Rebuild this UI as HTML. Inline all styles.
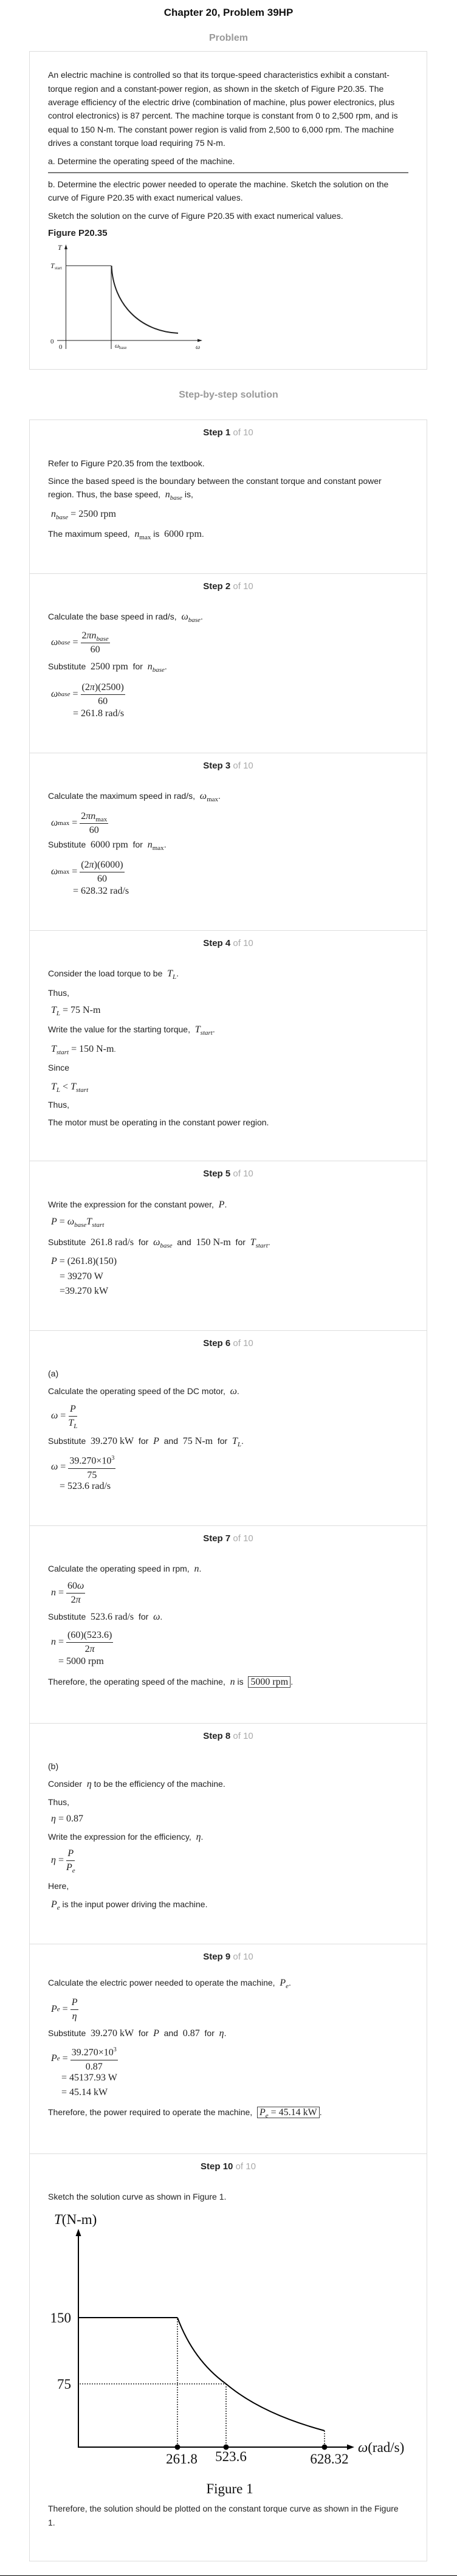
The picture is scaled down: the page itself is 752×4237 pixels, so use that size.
<!DOCTYPE html>
<html><head><meta charset="utf-8">
<style>
*{margin:0;padding:0;box-sizing:border-box}
html,body{width:752px;height:4237px;background:#fff;overflow:hidden}
body{position:relative;font-family:"Liberation Sans",Arial,sans-serif;color:#222}
.t{position:absolute;left:79px;line-height:20px;height:20px;white-space:nowrap;font-size:14px;color:#222}
.h{position:absolute;left:0;width:752px;text-align:center;font-family:"Liberation Sans Narrow","Liberation Sans",sans-serif;font-weight:bold;white-space:nowrap}
.sh{position:absolute;left:48px;width:655px;text-align:center;font-family:"Liberation Sans Narrow","Liberation Sans",sans-serif;font-weight:bold;font-size:15px;line-height:20px;height:20px;color:#222}
.sh span{font-weight:normal;color:#aaa}
.box{position:absolute;left:48px;width:655px;border:1px solid #ddd}
.dv{position:absolute;left:49px;width:653px;height:1px;background:#ddd}
.m{font-family:"Liberation Serif","Times New Roman",serif;font-size:16px}
i.v{font-family:"Liberation Serif",serif;font-style:italic;font-size:16px}
sub{font-family:"Liberation Serif",serif;font-size:11px;vertical-align:-4px;line-height:0}
sub.i{font-style:italic}
.fr{position:absolute;left:84px;height:40px;display:flex;align-items:center;font-family:"Liberation Serif",serif;font-size:16px;white-space:nowrap;color:#222}
.fc{display:inline-flex;flex-direction:column;align-items:center;margin-left:4px;vertical-align:middle}
.fc .n{line-height:22px;border-bottom:1px solid #222;padding:0 2px}
.fc .d{line-height:22px}
.bx{border:1px solid #444;padding:0 3px}
</style></head><body>

<div class="h" style="top:11px;font-size:17px;color:#111;line-height:20px">Chapter 20, Problem 39HP</div>
<div class="h" style="top:53px;font-size:16px;color:#999;line-height:20px">Problem</div>

<div class="box" style="top:84px;height:524px"></div>
<div class="t" style="top:113px">An electric machine is controlled so that its torque-speed characteristics exhibit a constant-</div>
<div class="t" style="top:136px">torque region and a constant-power region, as shown in the sketch of Figure P20.35. The</div>
<div class="t" style="top:158px">average efficiency of the electric drive (combination of machine, plus power electronics, plus</div>
<div class="t" style="top:180px">control electronics) is 87 percent. The machine torque is constant from 0 to 2,500 rpm, and is</div>
<div class="t" style="top:203px">equal to 150 N-m. The constant power region is valid from 2,500 to 6,000 rpm. The machine</div>
<div class="t" style="top:225px">drives a constant torque load requiring 75 N-m.</div>
<div class="t" style="top:255px">a. Determine the operating speed of the machine.</div>
<div style="position:absolute;left:79px;top:283px;width:593px;height:2px;background:#777"></div>
<div class="t" style="top:293px">b. Determine the electric power needed to operate the machine. Sketch the solution on the</div>
<div class="t" style="top:315px">curve of Figure P20.35 with exact numerical values.</div>
<div class="t" style="top:345px">Sketch the solution on the curve of Figure P20.35 with exact numerical values.</div>
<div class="t" style="top:374px;font-weight:bold;font-family:'Liberation Sans Narrow','Liberation Sans',sans-serif;font-size:15px">Figure P20.35</div>

<svg style="position:absolute;left:0;top:390px" width="360" height="200" viewBox="0 390 360 200">
<g font-family="Liberation Serif,serif" fill="#222">
<text x="95" y="411" font-size="12" font-style="italic">T</text>
<text x="83" y="441" font-size="12" font-style="italic">T</text><text x="90" y="443" font-size="7">start</text>
<text x="83" y="565" font-size="11">0</text>
<text x="97" y="574" font-size="11">0</text>
<text x="189" y="572" font-size="10" font-style="italic">ω</text><text x="196" y="574" font-size="7">base</text>
<text x="322" y="574" font-size="10" font-style="italic">ω</text>
</g>
<g stroke="#222" fill="none">
<line x1="108.5" y1="405" x2="108.5" y2="574" stroke-width="1"/>
<line x1="94" y1="560" x2="326" y2="560" stroke-width="1"/>
<line x1="108" y1="437" x2="183" y2="437" stroke-width="1"/>
<line x1="183" y1="437" x2="183" y2="574" stroke-width="1"/>
<path d="M183.5,437 C186,500 230,545 293,548" stroke-width="2"/>
</g>
<path d="M108.5,402 L106,410 L111,410 Z" fill="#222"/>
<path d="M333,560 L325,557.5 L325,562.5 Z" fill="#222"/>
</svg>

<div class="h" style="top:640px;font-size:16px;color:#999;line-height:20px">Step-by-step solution</div>

<div class="box" style="top:690px;height:3523px"></div>
<div class="dv" style="top:943px"></div>
<div class="dv" style="top:1238px"></div>
<div class="dv" style="top:1530px"></div>
<div class="dv" style="top:1909px"></div>
<div class="dv" style="top:2188px"></div>
<div class="dv" style="top:2509px"></div>
<div class="dv" style="top:2834px"></div>
<div class="dv" style="top:3197px"></div>
<div class="dv" style="top:3542px"></div>

<div class="sh" style="top:702px">Step 1 <span>of 10</span></div>
<div class="sh" style="top:955px">Step 2 <span>of 10</span></div>
<div class="sh" style="top:1250px">Step 3 <span>of 10</span></div>
<div class="sh" style="top:1542px">Step 4 <span>of 10</span></div>
<div class="sh" style="top:1921px">Step 5 <span>of 10</span></div>
<div class="sh" style="top:2200px">Step 6 <span>of 10</span></div>
<div class="sh" style="top:2521px">Step 7 <span>of 10</span></div>
<div class="sh" style="top:2846px">Step 8 <span>of 10</span></div>
<div class="sh" style="top:3209px">Step 9 <span>of 10</span></div>
<div class="sh" style="top:3554px">Step 10 <span>of 10</span></div>

<!-- Step 1 -->
<div class="t" style="top:752px">Refer to Figure P20.35 from the textbook.</div>
<div class="t" style="top:781px">Since the based speed is the boundary between the constant torque and constant power</div>
<div class="t" style="top:803px">region. Thus, the base speed, &nbsp;<i class="v">n</i><sub class="i">base</sub> is,</div>
<div class="t m" style="top:836px;left:84px"><i>n</i><sub class="i">base</sub> = 2500 rpm</div>
<div class="t" style="top:868px">The maximum speed, &nbsp;<i class="v">n</i><sub>max</sub> is &nbsp;<span class="m">6000 rpm</span>.</div>

<!-- Step 2 -->
<div class="t" style="top:1004px">Calculate the base speed in rad/s, &nbsp;<i class="v">ω</i><sub class="i">base</sub>.</div>
<div class="fr" style="top:1037px"><i>ω</i><sub class="i">base</sub>&nbsp;=<span class="fc"><span class="n">2<i>πn</i><sub class="i">base</sub></span><span class="d">60</span></span></div>
<div class="t" style="top:1086px">Substitute &nbsp;<span class="m">2500 rpm</span>&nbsp; for &nbsp;<i class="v">n</i><sub class="i">base</sub>.</div>
<div class="fr" style="top:1122px"><i>ω</i><sub class="i">base</sub>&nbsp;=<span class="fc"><span class="n">(2<i>π</i>)(2500)</span><span class="d">60</span></span></div>
<div class="t m" style="top:1164px;left:120px">= 261.8 rad/s</div>

<!-- Step 3 -->
<div class="t" style="top:1299px">Calculate the maximum speed in rad/s, &nbsp;<i class="v">ω</i><sub>max</sub>.</div>
<div class="fr" style="top:1334px"><i>ω</i><sub>max</sub>&nbsp;=<span class="fc"><span class="n">2<i>πn</i><sub>max</sub></span><span class="d">60</span></span></div>
<div class="t" style="top:1379px">Substitute &nbsp;<span class="m">6000 rpm</span>&nbsp; for &nbsp;<i class="v">n</i><sub>max</sub>.</div>
<div class="fr" style="top:1414px"><i>ω</i><sub>max</sub>&nbsp;=<span class="fc"><span class="n">(2<i>π</i>)(6000)</span><span class="d">60</span></span></div>
<div class="t m" style="top:1456px;left:120px">= 628.32 rad/s</div>

<!-- Step 4 -->
<div class="t" style="top:1591px">Consider the load torque to be &nbsp;<i class="v">T</i><sub class="i">L</sub>.</div>
<div class="t" style="top:1623px">Thus,</div>
<div class="t m" style="top:1652px;left:84px"><i>T</i><sub class="i">L</sub> = 75 N-m</div>
<div class="t" style="top:1683px">Write the value for the starting torque, &nbsp;<i class="v">T</i><sub class="i">start</sub>.</div>
<div class="t m" style="top:1716px;left:84px"><i>T</i><sub class="i">start</sub> = 150 N-m<span style="font-size:12px">.</span></div>
<div class="t" style="top:1746px">Since</div>
<div class="t m" style="top:1778px;left:84px"><i>T</i><sub class="i">L</sub> &lt; <i>T</i><sub class="i">start</sub></div>
<div class="t" style="top:1807px">Thus,</div>
<div class="t" style="top:1836px">The motor must be operating in the constant power region.</div>

<!-- Step 5 -->
<div class="t" style="top:1971px">Write the expression for the constant power, &nbsp;<i class="v">P</i>.</div>
<div class="t m" style="top:2000px;left:84px"><i>P</i> = <i>ω</i><sub class="i">base</sub><i>T</i><sub class="i">start</sub></div>
<div class="t" style="top:2033px">Substitute &nbsp;<span class="m">261.8 rad/s</span>&nbsp; for &nbsp;<i class="v">ω</i><sub class="i">base</sub>&nbsp; and &nbsp;<span class="m">150 N-m</span>&nbsp; for &nbsp;<i class="v">T</i><sub class="i">start</sub>.</div>
<div class="t m" style="top:2065px;left:84px"><i>P</i> = (261.8)(150)</div>
<div class="t m" style="top:2090px;left:98px">= 39270 W</div>
<div class="t m" style="top:2114px;left:98px">=39.270 kW</div>

<!-- Step 6 -->
<div class="t" style="top:2249px">(a)</div>
<div class="t" style="top:2278px">Calculate the operating speed of the DC motor, &nbsp;<i class="v">ω</i>.</div>
<div class="fr" style="top:2309px"><i>ω</i>&nbsp;=<span class="fc"><span class="n"><i>P</i></span><span class="d"><i>T</i><sub class="i">L</sub></span></span></div>
<div class="t" style="top:2360px">Substitute &nbsp;<span class="m">39.270 kW</span>&nbsp; for &nbsp;<i class="v">P</i>&nbsp; and &nbsp;<span class="m">75 N-m</span>&nbsp; for &nbsp;<i class="v">T</i><sub class="i">L</sub>.</div>
<div class="fr" style="top:2393px"><i>ω</i>&nbsp;=<span class="fc"><span class="n">39.270×10<sup style="font-size:10px">3</sup></span><span class="d">75</span></span></div>
<div class="t m" style="top:2435px;left:98px">= 523.6 rad/s</div>

<!-- Step 7 -->
<div class="t" style="top:2570px">Calculate the operating speed in rpm, &nbsp;<i class="v">n</i>.</div>
<div class="fr" style="top:2600px"><i>n</i>&nbsp;=<span class="fc"><span class="n">60<i>ω</i></span><span class="d">2<i>π</i></span></span></div>
<div class="t" style="top:2649px">Substitute &nbsp;<span class="m">523.6 rad/s</span>&nbsp; for &nbsp;<i class="v">ω</i>.</div>
<div class="fr" style="top:2681px"><i>n</i>&nbsp;=<span class="fc"><span class="n">(60)(523.6)</span><span class="d">2<i>π</i></span></span></div>
<div class="t m" style="top:2723px;left:96px">= 5000 rpm</div>
<div class="t" style="top:2756px">Therefore, the operating speed of the machine, &nbsp;<i class="v">n</i> is &nbsp;<span class="m bx">5000 rpm</span>.</div>

<!-- Step 8 -->
<div class="t" style="top:2895px">(b)</div>
<div class="t" style="top:2924px">Consider &nbsp;<i class="v">η</i> to be the efficiency of the machine.</div>
<div class="t" style="top:2954px">Thus,</div>
<div class="t m" style="top:2982px;left:84px"><i>η</i> = 0.87</div>
<div class="t" style="top:3011px">Write the expression for the efficiency, &nbsp;<i class="v">η</i>.</div>
<div class="fr" style="top:3040px"><i>η</i>&nbsp;=<span class="fc"><span class="n"><i>P</i></span><span class="d"><i>P</i><sub class="i">e</sub></span></span></div>
<div class="t" style="top:3092px">Here,</div>
<div class="t" style="top:3122px;left:84px"><i class="v">P</i><sub class="i">e</sub> is the input power driving the machine.</div>

<!-- Step 9 -->
<div class="t" style="top:3251px">Calculate the electric power needed to operate the machine, &nbsp;<i class="v">P</i><sub class="i">e</sub>.</div>
<div class="fr" style="top:3285px"><i>P</i><sub class="i">e</sub>&nbsp;=<span class="fc"><span class="n"><i>P</i></span><span class="d"><i>η</i></span></span></div>
<div class="t" style="top:3334px">Substitute &nbsp;<span class="m">39.270 kW</span>&nbsp; for &nbsp;<i class="v">P</i>&nbsp; and &nbsp;<span class="m">0.87</span>&nbsp; for &nbsp;<i class="v">η</i>.</div>
<div class="fr" style="top:3366px"><i>P</i><sub class="i">e</sub>&nbsp;=<span class="fc"><span class="n">39.270×10<sup style="font-size:10px">3</sup></span><span class="d">0.87</span></span></div>
<div class="t m" style="top:3408px;left:101px">= 45137.93 W</div>
<div class="t m" style="top:3432px;left:101px">= 45.14 kW</div>
<div class="t" style="top:3464px">Therefore, the power required to operate the machine, &nbsp;<span class="m bx"><i>P</i><sub class="i">e</sub> = 45.14 kW</span>.</div>

<!-- Step 10 -->
<div class="t" style="top:3603px">Sketch the solution curve as shown in Figure 1.</div>

<svg style="position:absolute;left:0;top:3620px" width="752" height="500" viewBox="0 0 752 500">
<g font-family="Liberation Serif,serif" fill="#111">
<text x="89" y="38" font-size="23"><tspan font-style="italic">T</tspan>(N-m)</text>
<text x="117" y="200" font-size="23" text-anchor="end">150</text>
<text x="117" y="309" font-size="23" text-anchor="end">75</text>
<text x="299" y="432" font-size="23" text-anchor="middle">261.8</text>
<text x="380" y="428" font-size="23" text-anchor="middle">523.6</text>
<text x="542" y="432" font-size="23" text-anchor="middle">628.32</text>
<text x="589" y="413" font-size="23"><tspan font-style="italic">ω</tspan>(rad/s)</text>
<text x="378" y="481" font-size="23" text-anchor="middle">Figure 1</text>
</g>
<g stroke="#000" fill="none" stroke-width="2">
<line x1="129" y1="54" x2="129" y2="406"/>
<line x1="128" y1="405" x2="574" y2="405"/>
<line x1="130" y1="192" x2="292" y2="192"/>
<path d="M292,192 Q318,262 372,301 Q430,350 534,378"/>
</g>
<g stroke="#000" fill="none" stroke-width="1.3" stroke-dasharray="2,2">
<line x1="292" y1="194" x2="292" y2="405"/>
<line x1="372" y1="301" x2="372" y2="405"/>
<line x1="534" y1="378" x2="534" y2="405"/>
<line x1="131" y1="301" x2="372" y2="301"/>
</g>
<path d="M129,46 L124.5,58 L133.5,58 Z" fill="#000"/>
<path d="M583,405 L571,400.5 L571,409.5 Z" fill="#000"/>
<circle cx="292" cy="405" r="4.5" fill="#000"/>
<circle cx="372" cy="405" r="4.5" fill="#000"/>
<circle cx="534" cy="405" r="4.5" fill="#000"/>
</svg>

<div class="t" style="top:4116px">Therefore, the solution should be plotted on the constant torque curve as shown in the Figure</div>
<div class="t" style="top:4139px">1.</div>

<div style="position:absolute;left:0;top:4236px;width:752px;height:1px;background:#000"></div>
</body></html>
